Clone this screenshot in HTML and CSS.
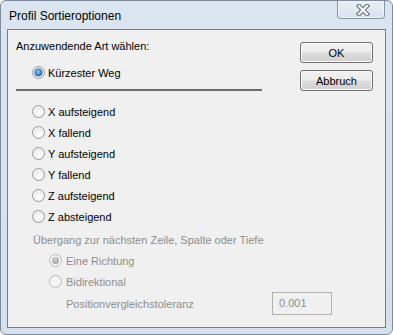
FILE: index.html
```html
<!DOCTYPE html>
<html lang="de">
<head>
    <meta charset="UTF-8">
    <title>Profil Sortieroptionen</title>
    <link rel="stylesheet" href="styles.css">
</head>
<body>
    <div class="window">
        <!-- Title bar -->
        <div class="titlebar">
            <span class="title">Profil Sortieroptionen</span>
            <button class="close-btn" type="button">
                <svg width="14" height="12" viewBox="0 0 14 12">
                    <path d="M3 2 L11 10 M11 2 L3 10" stroke="#6f7682" stroke-width="4.5" stroke-linecap="square"/>
                    <path d="M3 2 L11 10 M11 2 L3 10" stroke="#ffffff" stroke-width="2.2" stroke-linecap="square"/>
                </svg>
            </button>
        </div>

        <div class="client">
            <div class="options">
                <div class="row heading">Anzuwendende Art wählen:</div>
                <label class="row radio-row first">
                    <span class="radio checked"></span>Kürzester Weg
                </label>

                <div class="separator"></div>

                <div class="axis-list">
                    <label class="row radio-row"><span class="radio"></span>X aufsteigend</label>
                    <label class="row radio-row"><span class="radio"></span>X fallend</label>
                    <label class="row radio-row"><span class="radio"></span>Y aufsteigend</label>
                    <label class="row radio-row"><span class="radio"></span>Y fallend</label>
                    <label class="row radio-row"><span class="radio"></span>Z aufsteigend</label>
                    <label class="row radio-row"><span class="radio"></span>Z absteigend</label>
                </div>

                <!-- Disabled group -->
                <div class="transition">
                    <div class="row group-title">Übergang zur nächsten Zeile, Spalte oder Tiefe</div>
                    <label class="row radio-row sub"><span class="radio checked disabled"></span>Eine Richtung</label>
                    <label class="row radio-row sub"><span class="radio disabled"></span>Bidirektional</label>
                    <div class="row tolerance">
                        <span class="tolerance-label">Positionvergleichstoleranz</span>
                        <span class="textbox">0.001</span>
                    </div>
                </div>
            </div>

            <div class="buttons">
                <button class="btn" type="button">OK</button>
                <button class="btn" type="button">Abbruch</button>
            </div>
        </div>
    </div>
</body>
</html>
```

FILE: styles.css
```css
* {
    box-sizing: border-box;
    margin: 0;
    padding: 0;
}

body {
    background: #ffffff;
    font-family: 'Segoe UI', 'Liberation Sans', Arial, sans-serif;
    font-size: 11px;
    color: #000;
}

.window {
    width: 393px;
    height: 335px;
    display: flex;
    flex-direction: column;
    border: 1px solid #7f8b9b;
    border-radius: 6px;
    background: linear-gradient(#dbe5f1, #d5e0ed);
    padding: 0 6px 6px 6px;
}

.titlebar {
    height: 28px;
    display: flex;
    justify-content: space-between;
    align-items: flex-start;
}

.title {
    padding-left: 2px;
    font-size: 12px;
    line-height: 30px;
}

.close-btn {
    width: 48px;
    height: 18px;
    margin-right: 1px;
    border: 1px solid #8a96a7;
    border-top: none;
    border-radius: 0 0 4px 4px;
    background: linear-gradient(#e8eef6, #d8e2ee);
    box-shadow: inset 0 0 0 1px #eef3f9;
    display: flex;
    align-items: center;
    justify-content: center;
    padding-left: 4px;
}

.client {
    flex: 1;
    display: flex;
    border: 1px solid #737d8b;
    background: #f0f0f0;
}

.options {
    flex: 1;
    min-width: 0;
    padding: 5px 0 0 8px;
}

.row {
    height: 21px;
    display: flex;
    align-items: center;
    white-space: nowrap;
}

.radio-row {
    padding-left: 16px;
}

.first {
    margin-top: 6px;
}

.radio {
    flex-shrink: 0;
    width: 13px;
    height: 13px;
    margin-right: 3px;
    border-radius: 50%;
    border: 1px solid #979898;
    background: radial-gradient(circle at 60% 65%, #ffffff 0%, #f2f2f2 40%, #d9d9d9 100%);
    box-shadow: inset 0 0 0 1px #f4f4f4;
    position: relative;
}

.radio.checked::after {
    content: "";
    position: absolute;
    left: 2px;
    top: 2px;
    width: 7px;
    height: 7px;
    border-radius: 50%;
    background: radial-gradient(circle at 45% 40%, #8fd0f8 0%, #3a8ad8 45%, #14428c 100%);
    box-shadow: 0 0 0 0.5px #1d4f91;
}

.radio.disabled {
    border-color: #b8b8b8;
    background: #f4f4f4;
    box-shadow: none;
}

.radio.disabled.checked::after {
    background: radial-gradient(circle at 45% 40%, #d6d6d6 0%, #a9a9a9 60%, #8e8e8e 100%);
    box-shadow: none;
}

.separator {
    width: 246px;
    height: 2px;
    background: #6d6d6d;
    margin: 6px 0 10px 0;
}

.transition {
    margin-top: 2px;
    color: #8d8d8d;
}

.group-title {
    padding-left: 17px;
}

.sub {
    padding-left: 33px;
}

.sub .radio {
    margin-right: 4px;
}

.tolerance {
    height: 23px;
    padding-left: 50px;
}

.tolerance-label {
    flex-shrink: 0;
    width: 206px;
}

.textbox {
    flex-shrink: 0;
    width: 60px;
    height: 23px;
    border: 1px solid #b0b0b0;
    padding-left: 6px;
    line-height: 20px;
}

.buttons {
    flex-shrink: 0;
    width: 85px;
    padding-top: 12px;
    display: flex;
    flex-direction: column;
    gap: 7px;
}

.btn {
    width: 73px;
    height: 21px;
    border: 1px solid #707070;
    border-radius: 3px;
    background: linear-gradient(#f2f2f2 0%, #ebebeb 49%, #dddddd 51%, #cfcfcf 100%);
    box-shadow: inset 0 0 0 1px #fbfbfb;
    font-family: inherit;
    font-size: 11px;
    color: #000;
}
```
